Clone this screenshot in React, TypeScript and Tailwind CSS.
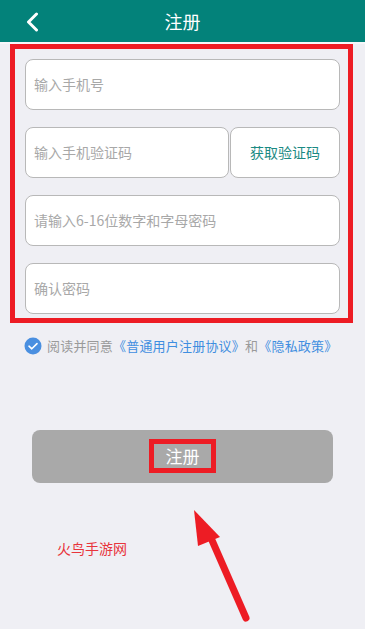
export default function App() {
  return (
    <div
      className="relative h-[629px] w-full overflow-hidden bg-[#efeff4]"
      style={{ fontFamily: '"Noto Sans CJK SC", "Noto Sans", sans-serif' }}
    >
      {/* 顶部导航 */}
      <div className="relative flex h-[42px] items-center justify-center bg-[#03827a]">
        <svg className="absolute left-[25px] top-[12px]" width="14" height="20" viewBox="0 0 14 20">
          <path d="M11.5 2 L3.5 10 L11.5 18" fill="none" stroke="#fff" strokeWidth="3" strokeLinecap="round" strokeLinejoin="round" />
        </svg>
        <span className="text-[18px] text-white">注册</span>
      </div>
      <div className="h-[2px] bg-[#f7f7fa]" />

      {/* 表单区域 */}
      <div className="ml-[10px] mr-[12px] border-[5px] border-[#ed1c24] pb-[4px] pl-[10px] pr-[8px] pt-[10px]">
        <div className="flex flex-col gap-[17px]">
          <div className="flex h-[51px] items-center rounded-[8px] border border-[#b8b8b8] bg-white px-[8px]">
            <span className="text-[14px] text-[#a8a8a8]">输入手机号</span>
          </div>
          <div className="flex h-[51px] gap-[1px]">
            <div className="flex flex-1 items-center rounded-[8px] border border-[#b8b8b8] bg-white px-[8px]">
              <span className="text-[14px] text-[#a8a8a8]">输入手机验证码</span>
            </div>
            <div className="flex w-[110px] items-center justify-center rounded-[8px] border border-[#b8b8b8] bg-white">
              <span className="text-[14px] text-[#1b8a83]">获取验证码</span>
            </div>
          </div>
          <div className="flex h-[51px] items-center rounded-[8px] border border-[#b8b8b8] bg-white px-[8px]">
            <span className="text-[14px] text-[#a8a8a8]">请输入6-16位数字和字母密码</span>
          </div>
          <div className="flex h-[51px] items-center rounded-[8px] border border-[#b8b8b8] bg-white px-[8px]">
            <span className="text-[14px] text-[#a8a8a8]">确认密码</span>
          </div>
        </div>
      </div>

      {/* 协议 */}
      <div className="mt-[13px] flex items-center pl-[24px] text-[13px] tracking-[0.2px]">
        <svg width="18" height="18" viewBox="0 0 18 18">
          <circle cx="9" cy="9" r="8.5" fill="#4a8fe0" />
          <path d="M5 9.2 L7.8 11.8 L13 6.6" fill="none" stroke="#fff" strokeWidth="1.6" strokeLinecap="round" strokeLinejoin="round" />
        </svg>
        <span className="ml-[5px] text-[#9a9a9a]">阅读并同意</span>
        <span className="text-[#3f8ee0]">《普通用户注册协议》</span>
        <span className="text-[#9a9a9a]">和</span>
        <span className="text-[#3f8ee0]">《隐私政策》</span>
      </div>

      {/* 注册按钮 */}
      <div className="mt-[74px] px-[32px]">
        <div className="flex h-[53px] w-[301px] items-center justify-center rounded-[8px] bg-[#a9a9a9]">
          <div className="flex h-[34px] w-[67px] items-center justify-center border-[5px] border-[#ed1c24]">
            <span className="text-[17px] text-white">注册</span>
          </div>
        </div>
      </div>

      <div className="mt-[55px] pl-[57px] text-[14px] text-[#e8353c]">火鸟手游网</div>

      {/* 红色箭头 */}
      <svg className="absolute left-0 top-0" width="365" height="629" viewBox="0 0 365 629">
        <line x1="211" y1="538" x2="246" y2="618" stroke="#ed1c24" strokeWidth="7" strokeLinecap="round" />
        <polygon points="194,510 220,537 198,546" fill="#ed1c24" />
      </svg>
    </div>
  );
}
